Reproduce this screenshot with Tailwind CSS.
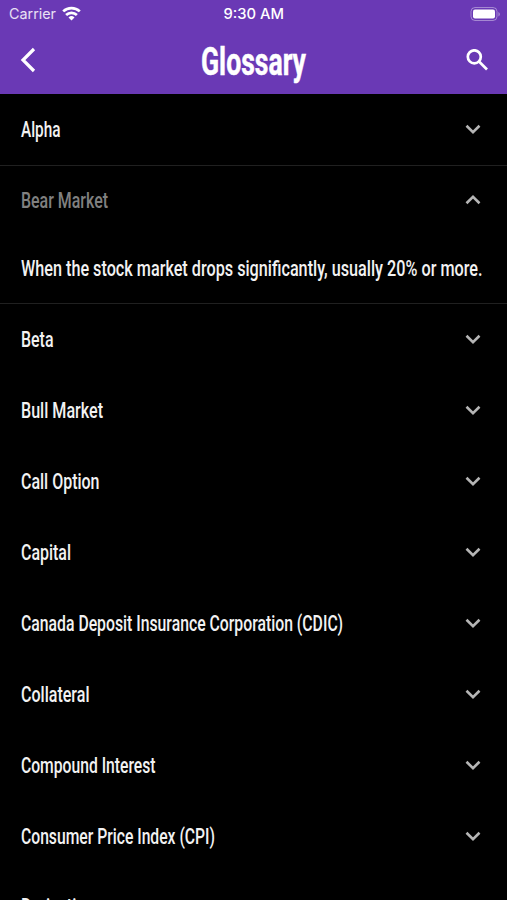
<!DOCTYPE html>
<html lang="en">
<head>
    <meta charset="UTF-8">
    <meta name="viewport" content="width=device-width, initial-scale=1.0">
    <title>Glossary</title>
    <script src="https://cdn.jsdelivr.net/npm/@tailwindcss/browser@4"></script>
</head>
<body class="bg-black text-[#f2f2f2] font-[Roboto,sans-serif]">

    <div class="w-[507px] h-[900px] overflow-hidden flex flex-col">
        <header class="bg-[#6a39b5] h-[94px] shrink-0 text-white">
            <!-- Status bar -->
            <div class="grid grid-cols-3 items-center h-[27px] font-[Inter,sans-serif] text-[14.5px]">
                <div class="flex items-center gap-[6px] pl-[9px] text-white/85">
                    <svg class="w-[47px] h-[20px] overflow-visible" fill="currentColor"><text x="0" y="15" textLength="47" lengthAdjust="spacingAndGlyphs">Carrier</text></svg>
                    <svg class="w-[19px] h-[15px]" viewBox="0 0 19 15" fill="none" stroke="white" stroke-width="2.7">
                        <path d="M1.2 5.4a12 12 0 0 1 16.6 0"/>
                        <path d="M4.1 9a7.8 7.8 0 0 1 10.8 0"/>
                        <path d="M9.5 14.5 6.5 11.5a4.3 4.3 0 0 1 6 0z" fill="white" stroke="none"/>
                    </svg>
                </div>
                <div class="flex justify-center font-medium">
                    <svg class="w-[61px] h-[20px] overflow-visible" fill="currentColor"><text x="0.5" y="15" textLength="60.5" lengthAdjust="spacingAndGlyphs">9:30 AM</text></svg>
                </div>
                <div class="flex justify-end pr-[6px]">
                    <svg class="w-[31px] h-[14px]" viewBox="0 0 31 14">
                        <rect x="1" y=".5" width="26" height="13" rx="4" fill="none" stroke="white" stroke-opacity=".4"/>
                        <rect x="3" y="2.5" width="22" height="9" rx="2" fill="white"/>
                        <path d="M28.5 5v4.4c1.7-.8 1.7-3.6 0-4.4z" fill="white" fill-opacity=".5"/>
                    </svg>
                </div>
            </div>
            <!-- Title bar -->
            <div class="flex items-center justify-between h-[66px] pl-[20px] pr-[18px]">
                <svg class="w-[16px] h-[26px]" viewBox="0 0 16 26" fill="none" stroke="white" stroke-width="3.2">
                    <path d="M14 2 3 13l11 11"/>
                </svg>
                <h1 class="pl-[4px] text-[39px] font-bold">
                    <svg class="block w-[105px] h-[50px] overflow-visible" fill="currentColor" stroke="currentColor" stroke-width=".5"><text x="0" y="40" textLength="105" lengthAdjust="spacingAndGlyphs">Glossary</text></svg>
                </h1>
                <svg class="w-[23px] h-[23px]" viewBox="0 0 23 23" fill="none" stroke="white" stroke-width="2.7">
                    <circle cx="8.3" cy="7.8" r="6.5"/>
                    <path d="m13 12.5 8 8"/>
                </svg>
            </div>
        </header>

        <main id="glossary"></main>
    </div>

    <script>
        // width is the set width of the condensed lettering
        const terms = [
            { term: "Alpha", width: 39.5 },
            { term: "Bear Market", width: 87, open: true, text: "When the stock market drops significantly, usually 20% or more.", textWidth: 461.5 },
            { term: "Beta", width: 32.5 },
            { term: "Bull Market", width: 82 },
            { term: "Call Option", width: 78.5 },
            { term: "Capital", width: 50 },
            { term: "Canada Deposit Insurance Corporation (CDIC)", width: 322 },
            { term: "Collateral", width: 68.5 },
            { term: "Compound Interest", width: 134.5 },
            { term: "Consumer Price Index (CPI)", width: 194 },
            { term: "Derivative", width: 72 }
        ];

        function label(text, width, style) {
            return `<svg class="h-[30px] overflow-visible text-[22px] font-medium ${style}" width="${width}" fill="currentColor"><text x="0" y="23.3" textLength="${width}" lengthAdjust="spacingAndGlyphs">${text}</text></svg>`;
        }

        document.getElementById("glossary").innerHTML = terms.map(row => `
            <section class="${row.open ? "h-[139px] border-y border-[#202020]" : "h-[70.9px]"}">
                <div class="flex items-center justify-between ${row.open ? "h-[69px]" : "h-[70.9px]"} pl-[20.5px] pr-[26px]">
                    ${label(row.term, row.width, row.open ? "text-[#808080]" : "")}
                    <svg class="w-[16px] h-[10px] ${row.open ? "rotate-180" : ""}" viewBox="0 0 16 10" fill="none" stroke="#b5b5b5" stroke-width="2.6">
                        <path d="m1.5 1.7 6.5 6.4 6.5-6.4"/>
                    </svg>
                </div>
                ${row.open ? `<div class="flex items-center h-[67px] pl-[20.5px]">${label(row.text, row.textWidth, "")}</div>` : ""}
            </section>
        `).join('');
    </script>
</body>
</html>
